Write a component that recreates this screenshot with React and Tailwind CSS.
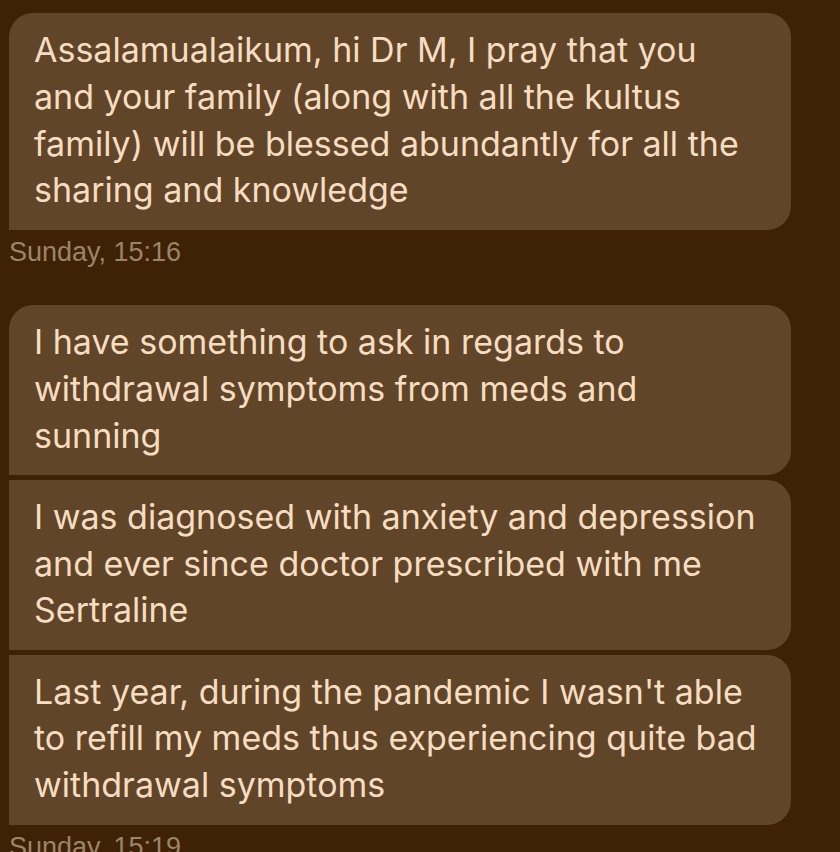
const groups = [
  {
    time: "Sunday, 15:16",
    messages: [
      [
        "Assalamualaikum, hi Dr M, I pray that you",
        "and your family (along with all the kultus",
        "family) will be blessed abundantly for all the",
        "sharing and knowledge",
      ],
    ],
  },
  {
    time: "Sunday, 15:19",
    messages: [
      [
        "I have something to ask in regards to",
        "withdrawal symptoms from meds and",
        "sunning",
      ],
      [
        "I was diagnosed with anxiety and depression",
        "and ever since doctor prescribed with me",
        "Sertraline",
      ],
      [
        "Last year, during the pandemic I wasn't able",
        "to refill my meds thus experiencing quite bad",
        "withdrawal symptoms",
      ],
    ],
  },
];

function Bubble({ lines, first }) {
  return (
    <div
      className={`w-[782px] bg-[#614529] pl-[25px] pr-[25px] pt-[14px] pb-[16px] rounded-r-[24px] ${
        first ? "rounded-tl-[24px]" : ""
      }`}
    >
      <p
        className="text-[34px] leading-[46.75px] text-[#f6ddc1] whitespace-nowrap"
        style={{ fontFamily: "Inter, sans-serif" }}
      >
        {lines.map((l, i) => (
          <span key={i} className="block">
            {l}
          </span>
        ))}
      </p>
    </div>
  );
}

export default function App() {
  return (
    <div className="h-[852px] overflow-hidden bg-[#3f2105] pt-[13px] pl-[9px] flex flex-col gap-[37px]">
      {groups.map((g) => (
        <div key={g.time} className="flex flex-col">
          <div className="flex flex-col gap-[4.5px]">
            {g.messages.map((m, i) => (
              <Bubble key={i} lines={m} first={i === 0} />
            ))}
          </div>
          <span
            className="mt-[7px] text-[27px] leading-[31px] text-[#9c8468]"
            style={{ fontFamily: "'Liberation Sans', Arial, sans-serif" }}
          >
            {g.time}
          </span>
        </div>
      ))}
    </div>
  );
}
